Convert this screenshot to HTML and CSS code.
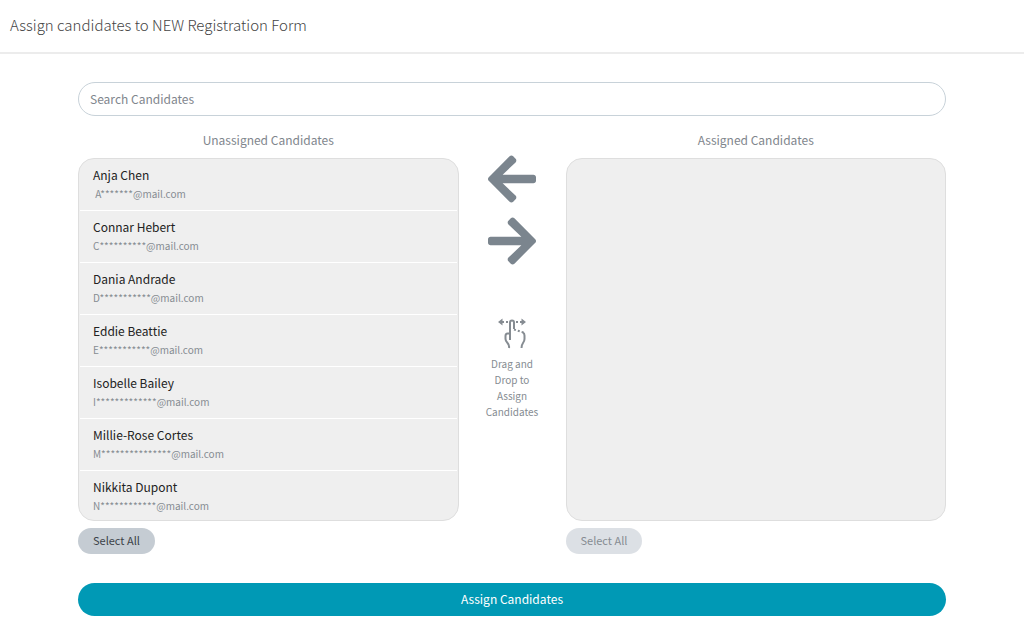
FILE: index.html
```
<!DOCTYPE html>
<html lang="en">
<head>
    <meta charset="utf-8">
    <meta name="viewport" content="width=device-width, initial-scale=1">
    <title>Assign candidates</title>
    <link rel="stylesheet" href="styles.css">
</head>
<body>
<header>
    <h1>Assign candidates to NEW Registration Form</h1>
</header>

<main>
    <input type="text" id="searchInput" class="search" placeholder="Search Candidates" aria-label="Search Candidates">

    <div class="columns">
        <section class="column">
            <h2>Unassigned Candidates</h2>
            <ul class="list" id="unassignedList">
                <li><span class="name">Anja Chen</span><span class="email">&nbsp;A*******@mail.com</span></li>
                <li><span class="name">Connar Hebert</span><span class="email">C**********@mail.com</span></li>
                <li><span class="name">Dania Andrade</span><span class="email">D***********@mail.com</span></li>
                <li><span class="name">Eddie Beattie</span><span class="email">E***********@mail.com</span></li>
                <li><span class="name">Isobelle Bailey</span><span class="email">I*************@mail.com</span></li>
                <li><span class="name">Millie-Rose Cortes</span><span class="email">M***************@mail.com</span></li>
                <li><span class="name">Nikkita Dupont</span><span class="email">N************@mail.com</span></li>
            </ul>
            <button type="button" class="select-all">Select All</button>
        </section>

        <div class="controls">
            <button type="button" class="arrow" aria-label="Unassign">
                <svg width="48" height="48" viewBox="0 32 448 448">
                    <path d="M257.5 445.1l-22.2 22.2c-9.4 9.4-24.6 9.4-33.9 0L7 273c-9.4-9.4-9.4-24.6 0-33.9L201.4 44.7c9.4-9.4 24.6-9.4 33.9 0l22.2 22.2c9.5 9.5 9.3 25-.4 34.3L136.6 216H424c13.3 0 24 10.7 24 24v32c0 13.3-10.7 24-24 24H136.6l120.5 114.8c9.8 9.3 10 24.8.4 34.3z"/>
                </svg>
            </button>
            <button type="button" class="arrow" aria-label="Assign">
                <svg width="48" height="48" viewBox="0 32 448 448">
                    <path d="M190.5 66.9l22.2-22.2c9.4-9.4 24.6-9.4 33.9 0L441 239c9.4 9.4 9.4 24.6 0 33.9L246.6 467.3c-9.4 9.4-24.6 9.4-33.9 0l-22.2-22.2c-9.5-9.5-9.3-25 .4-34.3L311.4 296H24c-13.3 0-24-10.7-24-24v-32c0-13.3 10.7-24 24-24h287.4L190.9 101.2c-9.8-9.3-10-24.8-.4-34.3z"/>
                </svg>
            </button>
            <svg class="drag-icon" width="30" height="32" viewBox="0 0 30 32">
                <path class="head" d="M5.5.5 1 4l4.500 3.500zM24.500.5 29 4l-4.500 3.500z"/>
                <path class="dots" d="M5 4h7M19 4h6"/>
                <path d="M13 22V4.500q0-2 2-2t2 2V11"/>
                <path class="dots" d="M17 11.500l9.500 3"/>
                <path d="M13 15.500h-2.500q-2 0-2 2.500v3q0 2 2 4t1.500 5M26 14.500q1.500 1 1.500 3V21q0 2-1.500 4t-1.500 5"/>
            </svg>
            <p>Drag and Drop to Assign Candidates</p>
        </div>

        <section class="column">
            <h2>Assigned Candidates</h2>
            <ul class="list" id="assignedList"></ul>
            <button type="button" class="select-all" disabled>Select All</button>
        </section>
    </div>

    <button type="button" class="assign">Assign Candidates</button>
</main>
</body>
</html>
```
FILE: styles.css
```
* {
    box-sizing: border-box;
}

body {
    font-family: "Noto Sans CJK SC", "Open Sans", sans-serif;
    background-color: white;
    margin: 0;
    color: #444;
}

header {
    padding: 12px 10px 15px;
    border-bottom: 2px solid #ececec;
}

h1 {
    margin: 0;
    font-size: 15px;
    font-weight: 300;
    line-height: 25px;
    color: #444;
}

main {
    max-width: 1200px;
    margin: 0 auto;
    padding: 28px 78px 16px;
}

button {
    font-family: inherit;
    border: none;
    cursor: pointer;
}

.search {
    display: block;
    width: 100%;
    height: 34px;
    padding: 0 11px 2px;
    border: 1px solid #c8d2d9;
    border-radius: 17px;
    font-family: inherit;
    font-size: 12px;
    color: #444;
}

.search::placeholder {
    color: #7f868d;
    opacity: 1;
}

.columns {
    display: grid;
    grid-template-columns: 1fr 107px 1fr;
    margin-top: 14px;
}

h2 {
    margin: 0 0 8px;
    font-size: 12px;
    font-weight: 400;
    line-height: 20px;
    text-align: center;
    color: #7f868d;
}

.list {
    list-style: none;
    height: 363px;
    margin: 0 0 7px;
    padding: 0 1px;
    overflow: hidden;
    background-color: #efefef;
    border: 1px solid #dedede;
    border-radius: 16px;
}

.list li {
    height: 52px;
    padding: 6px 13px 0;
    border-bottom: 1px solid white;
}

.list li:last-child {
    border-bottom: none;
}

.name,
.email {
    display: block;
}

.name {
    font-size: 12px;
    line-height: 20px;
    color: #222;
}

.email {
    font-size: 10px;
    line-height: 18px;
    color: #868c92;
}

.select-all {
    display: block;
    height: 26px;
    padding: 0 15px 2px;
    border-radius: 13px;
    background-color: #c5ccd3;
    font-size: 11px;
    color: #3c4248;
}

.select-all:disabled {
    background-color: #dce0e5;
    color: #868c92;
    cursor: default;
}

.controls {
    display: flex;
    flex-direction: column;
    align-items: center;
    padding-top: 25px;
}

.arrow {
    margin-bottom: 14px;
    padding: 0;
    background: none;
}

.arrow svg {
    display: block;
    fill: #7b858e;
}

.drag-icon {
    margin-top: 39px;
    fill: none;
    stroke: #868c92;
    stroke-width: 2;
}

.drag-icon .head {
    fill: #868c92;
    stroke: none;
}

.drag-icon .dots {
    stroke-dasharray: 2 2;
}

.controls p {
    width: 64px;
    margin: 6px 0 0;
    font-size: 10px;
    line-height: 16px;
    text-align: center;
    color: #868c92;
}

.assign {
    display: block;
    width: 100%;
    height: 33px;
    margin-top: 29px;
    padding-bottom: 3px;
    border-radius: 17px;
    background-color: #0099b5;
    font-size: 12px;
    color: white;
}
```
